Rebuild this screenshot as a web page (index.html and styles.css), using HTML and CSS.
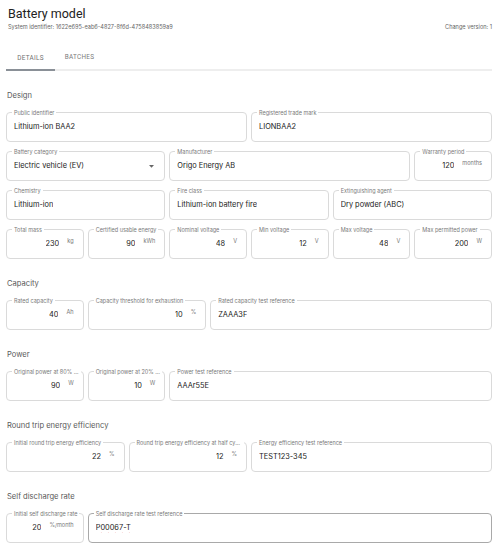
FILE: index.html
```html
<!DOCTYPE html>
<html lang="en">
<head>
<meta charset="utf-8">
<title>Battery model</title>
<link rel="stylesheet" href="styles.css">
</head>
<body>
<div class="page">
  <header class="head">
    <h1 class="title">Battery model</h1>
    <div class="meta">
      <span>System identifier: 1622e695-eab6-4827-8f6d-4758483859a9</span>
      <span>Change version: 1</span>
    </div>
  </header>

  <nav class="tabs">
    <div class="tab active">DETAILS</div>
    <div class="tab">BATCHES</div>
  </nav>

  <section class="sec">
    <h2 class="sec-title">Design</h2>
    <div class="grid">
      <div class="field s6"><span class="lbl">Public identifier</span><span class="val">Lithium-ion BAA2</span></div>
      <div class="field s6"><span class="lbl">Registered trade mark</span><span class="val">LIONBAA2</span></div>

      <div class="field s4 select"><span class="lbl">Battery category</span><span class="val">Electric vehicle (EV)</span>
        <svg class="caret" width="5" height="3" viewBox="0 0 5 3"><path d="M0 0h5L2.5 2.8z"/></svg></div>
      <div class="field s6"><span class="lbl">Manufacturer</span><span class="val">Origo Energy AB</span></div>
      <div class="field s2 num"><span class="lbl">Warranty period</span><span class="val">120</span><span class="unit">months</span></div>

      <div class="field s4"><span class="lbl">Chemistry</span><span class="val">Lithium-ion</span></div>
      <div class="field s4"><span class="lbl">Fire class</span><span class="val">Lithium-ion battery fire</span></div>
      <div class="field s4"><span class="lbl">Extinguishing agent</span><span class="val">Dry powder (ABC)</span></div>

      <div class="field s2 num"><span class="lbl">Total mass</span><span class="val">230</span><span class="unit">kg</span></div>
      <div class="field s2 num"><span class="lbl">Certified usable energy</span><span class="val">90</span><span class="unit">kWh</span></div>
      <div class="field s2 num"><span class="lbl">Nominal voltage</span><span class="val">48</span><span class="unit">V</span></div>
      <div class="field s2 num"><span class="lbl">Min voltage</span><span class="val">12</span><span class="unit">V</span></div>
      <div class="field s2 num"><span class="lbl">Max voltage</span><span class="val">48</span><span class="unit">V</span></div>
      <div class="field s2 num"><span class="lbl">Max permitted power</span><span class="val">200</span><span class="unit">W</span></div>
    </div>
  </section>

  <section class="sec">
    <h2 class="sec-title">Capacity</h2>
    <div class="grid">
      <div class="field s2 num"><span class="lbl">Rated capacity</span><span class="val">40</span><span class="unit">Ah</span></div>
      <div class="field s3 num"><span class="lbl">Capacity threshold for exhaustion</span><span class="val">10</span><span class="unit">%</span></div>
      <div class="field s7"><span class="lbl">Rated capacity test reference</span><span class="val">ZAAA3F</span></div>
    </div>
  </section>

  <section class="sec">
    <h2 class="sec-title">Power</h2>
    <div class="grid">
      <div class="field s2 num"><span class="lbl">Original power at 80% state of charge</span><span class="val">90</span><span class="unit">W</span></div>
      <div class="field s2 num"><span class="lbl">Original power at 20% state of charge</span><span class="val">10</span><span class="unit">W</span></div>
      <div class="field s8"><span class="lbl">Power test reference</span><span class="val">AAAr55E</span></div>
    </div>
  </section>

  <section class="sec">
    <h2 class="sec-title">Round trip energy efficiency</h2>
    <div class="grid">
      <div class="field s3 num"><span class="lbl">Initial round trip energy efficiency</span><span class="val">22</span><span class="unit">%</span></div>
      <div class="field s3 num"><span class="lbl">Round trip energy efficiency at half cycle life</span><span class="val">12</span><span class="unit">%</span></div>
      <div class="field s6"><span class="lbl">Energy efficiency test reference</span><span class="val">TEST123-345</span></div>
    </div>
  </section>

  <section class="sec">
    <h2 class="sec-title">Self discharge rate</h2>
    <div class="grid">
      <div class="field s2 num"><span class="lbl">Initial self discharge rate</span><span class="val">20</span><span class="unit">%/month</span></div>
      <div class="field s10 hover"><span class="lbl">Self discharge rate test reference</span><span class="val spell">P00067-T</span></div>
    </div>
  </section>
</div>
</body>
</html>
```

FILE: styles.css
```css
* { box-sizing: border-box; }

html, body {
  margin: 0;
  padding: 0;
  background: #ffffff;
}

body {
  font-family: Inter, "Liberation Sans", sans-serif;
  color: #222222;
}

.page {
  padding: 0 8px 0 6px;
}

.head {
  padding: 6px 0 0 2px;
}

.title {
  margin: 0;
  font-family: Roboto, "Liberation Sans", sans-serif;
  font-weight: 400;
  font-size: 12.5px;
  line-height: 16px;
  color: #222222;
}

.meta {
  display: flex;
  justify-content: space-between;
  font-family: Inter, "Liberation Sans", sans-serif;
  font-size: 5.6px;
  line-height: 8px;
  color: #666666;
  margin-top: 1px;
}

.tabs {
  display: flex;
  margin-top: 13px;
  border-bottom: 2px solid #eeeeee;
}

.tab {
  width: 49px;
  height: 25px;
  display: flex;
  align-items: center;
  justify-content: center;
  font-family: Roboto, "Liberation Sans", sans-serif;
  font-weight: 400;
  font-size: 6.4px;
  letter-spacing: 0.3px;
  color: #7a7a7a;
}

.tab.active {
  border-bottom: 2px solid #8a9097;
  margin-bottom: -2px;
  height: 27px;
  padding-top: 2px;
  color: #707070;
}

.sec {
  margin-top: 19px;
}

.sec-title {
  margin: 0 0 10px 1px;
  font-family: Inter, "Liberation Sans", sans-serif;
  font-weight: 400;
  font-size: 7.6px;
  line-height: 12px;
  color: #5a5a5a;
}

.grid {
  display: grid;
  grid-template-columns: repeat(12, minmax(0, 1fr));
  column-gap: 4px;
  row-gap: 9px;
}

.s2 { grid-column: span 2; }
.s3 { grid-column: span 3; }
.s4 { grid-column: span 4; }
.s6 { grid-column: span 6; }
.s7 { grid-column: span 7; }
.s8 { grid-column: span 8; }
.s10 { grid-column: span 10; }

.field {
  position: relative;
  height: 30px;
  min-width: 0;
  border: 1px solid #dadada;
  border-radius: 4px;
  display: flex;
  align-items: center;
  padding: 0 7px;
}

.field.hover {
  border-color: #a9a9a9;
}

.lbl {
  position: absolute;
  top: -4.5px;
  left: 5px;
  max-width: calc(100% - 7px);
  padding: 0 2px;
  background: #ffffff;
  font-size: 5.5px;
  line-height: 8px;
  color: #7a7a7a;
  white-space: nowrap;
  overflow: hidden;
  text-overflow: ellipsis;
}

.val {
  font-size: 7.4px;
  line-height: 10px;
  color: #222222;
  white-space: nowrap;
  overflow: hidden;
  text-overflow: ellipsis;
}

.select .val {
  flex: 1;
}

.caret {
  fill: #666666;
  margin-right: 3px;
  flex: none;
}

.num {
  justify-content: flex-end;
  padding-right: 9px;
}

.unit {
  margin-left: 8px;
  margin-bottom: 5px;
  font-size: 5.6px;
  line-height: 7px;
  color: #777777;
  white-space: nowrap;
}

.spell {
  text-decoration: underline wavy #e06060;
  text-decoration-thickness: 1px;
  text-underline-offset: 2px;
  text-decoration-skip-ink: none;
}
```
